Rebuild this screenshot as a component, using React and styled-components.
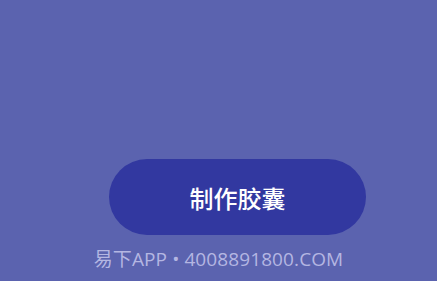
import React from "react";
import styled, { createGlobalStyle } from "styled-components";

const Global = createGlobalStyle`
  html, body { margin: 0; padding: 0; background: #5b63af; }
  #root { height: 281px; }
`;

const Page = styled.div`
  height: 281px;
  background: #5b63af;
  display: flex;
  flex-direction: column;
  align-items: center;
  padding-top: 159px;
  box-sizing: border-box;
  font-family: "Open Sans", "Noto Sans CJK SC", sans-serif;
`;

const ActionButton = styled.button`
  width: 257px;
  height: 76px;
  margin-left: 38px;
  border: none;
  border-radius: 38px;
  background: #3238a0;
  color: #ffffff;
  font-family: "Noto Sans CJK SC", sans-serif;
  font-size: 24px;
  font-weight: 500;
  display: flex;
  align-items: center;
  justify-content: center;
  padding: 0;
  cursor: pointer;
`;

const Footer = styled.div`
  margin-top: 9px;
  color: #b4b6e2;
  font-size: 19px;
  letter-spacing: 0.1px;
  line-height: 30px;
  white-space: nowrap;
`;

export default function App() {
  return (
    <>
      <Global />
      <Page>
        <ActionButton>制作胶囊</ActionButton>
        <Footer>易下APP • 4008891800.COM</Footer>
      </Page>
    </>
  );
}
